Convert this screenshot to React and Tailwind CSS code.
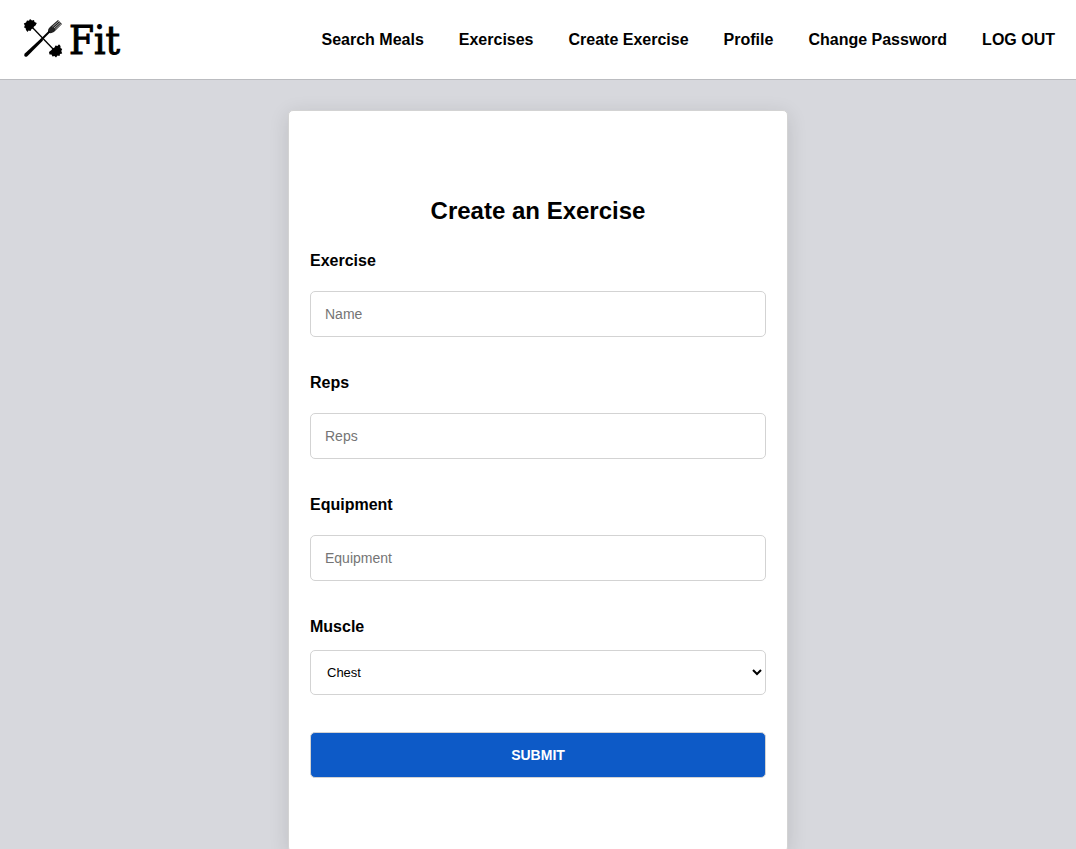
const links = ["Search Meals", "Exercises", "Create Exercise", "Profile", "Change Password"];

const fields = [
  { id: "exercise", label: "Exercise", placeholder: "Name" },
  { id: "reps", label: "Reps", placeholder: "Reps" },
  { id: "equipment", label: "Equipment", placeholder: "Equipment" },
];

const muscles = ["Chest", "Back", "Shoulders", "Biceps", "Triceps", "Legs", "Abs"];

function LogoMark() {
  return (
    <svg viewBox="0 0 40 40" className="mb-1 size-10" aria-hidden="true">
      {/* barbell */}
      <path d="M8 8 32 33" stroke="black" strokeWidth="1.3" />
      <path d="M.8 5.5 3 4.5 4 2.5 6 2.8 7 1 9 2.6 11 2 11.5 4 13.8 5 12.5 7.5 11 8.5 10 10.5 8.5 11 7.5 13 5.5 12.5 4.5 14 3 12 2.5 10 1 9.5 1.8 7.5Z" />
      <path d="M26 34 28.5 32 29.5 30.5 31.5 29.5 32.5 27.5 34.5 28 36 26.3 37.5 28 37.5 30 39.2 31 38.3 33 39.2 35.5 37 36 36.5 38 34.5 37.5 33 39.5 31.5 38 29.5 38.5 28.5 36.5 26.5 36.5Z" />
      {/* fork */}
      <path d="M25.3 14.7C24.5 12.5 25.3 10.5 27 9L35 2 39 6 32 13C30 15 27.5 15.8 25.3 14.7Z" fill="#222" />
      <path d="M29.5 8.8 36 3M31 10 37.3 4.3M32.2 11.2 38.3 5.6" stroke="white" strokeWidth=".6" />
      <path d="M26.5 13.5 18 22" stroke="black" strokeWidth="2" />
      <path d="M18 20.5 20 22.5 4.3 38.2C2.2 39.8 .2 37.8 1.8 35.6Z" />
    </svg>
  );
}

export default function App() {
  return (
    <div className="flex min-h-screen flex-col bg-[#d7d8dd] font-['Liberation_Sans',Arial,sans-serif] text-base text-black">
      <header className="flex h-20 items-center justify-between border-b border-[#bbbcc0] bg-white pr-[21px] pl-[23px]">
        <a href="#home" className="flex items-center gap-1.5">
          <LogoMark />
          <span className="font-['DejaVu_Serif_Condensed','DejaVu_Serif',serif] text-[40px] leading-none [-webkit-text-stroke:1px_black]">
            Fit
          </span>
        </a>
        <nav className="flex items-center gap-[35px] font-bold whitespace-nowrap">
          {links.map((link) => (
            <a key={link} href="#nav">{link}</a>
          ))}
          <button type="button" className="font-bold">LOG OUT</button>
        </nav>
      </header>
      <main className="flex justify-center pt-[30px]">
        <form
          className="flex w-full max-w-[500px] flex-col rounded-[5px] border border-[#d3d3d3] bg-white px-[21px] pt-[84px] pb-[73px] shadow-[0_4px_20px_rgba(0,0,0,0.12)]"
          onSubmit={(e) => e.preventDefault()}
        >
          <h1 className="mb-6 text-center text-2xl leading-8 font-bold">Create an Exercise</h1>
          {fields.map(({ id, label, placeholder }) => (
            <div key={id} className="mb-9 flex flex-col gap-5">
              <label htmlFor={id} className="leading-5 font-bold">{label}</label>
              <input
                id={id}
                type="text"
                placeholder={placeholder}
                className="h-[46px] rounded-[5px] border border-[#d3d3d3] bg-white px-[14px] text-sm placeholder:text-[#757575]"
              />
            </div>
          ))}
          <div className="mb-[37px] flex flex-col gap-[13px]">
            <label htmlFor="muscle" className="leading-5 font-bold">Muscle</label>
            <select
              id="muscle"
              className="h-[45px] rounded-[5px] border border-[#d3d3d3] bg-white pl-3 text-[13px]"
            >
              {muscles.map((muscle) => (
                <option key={muscle}>{muscle}</option>
              ))}
            </select>
          </div>
          <button
            type="submit"
            className="h-[46px] rounded-[5px] border border-[#d3d3d3] bg-[#0d5ac7] text-sm font-bold text-white"
          >
            SUBMIT
          </button>
        </form>
      </main>
    </div>
  );
}
